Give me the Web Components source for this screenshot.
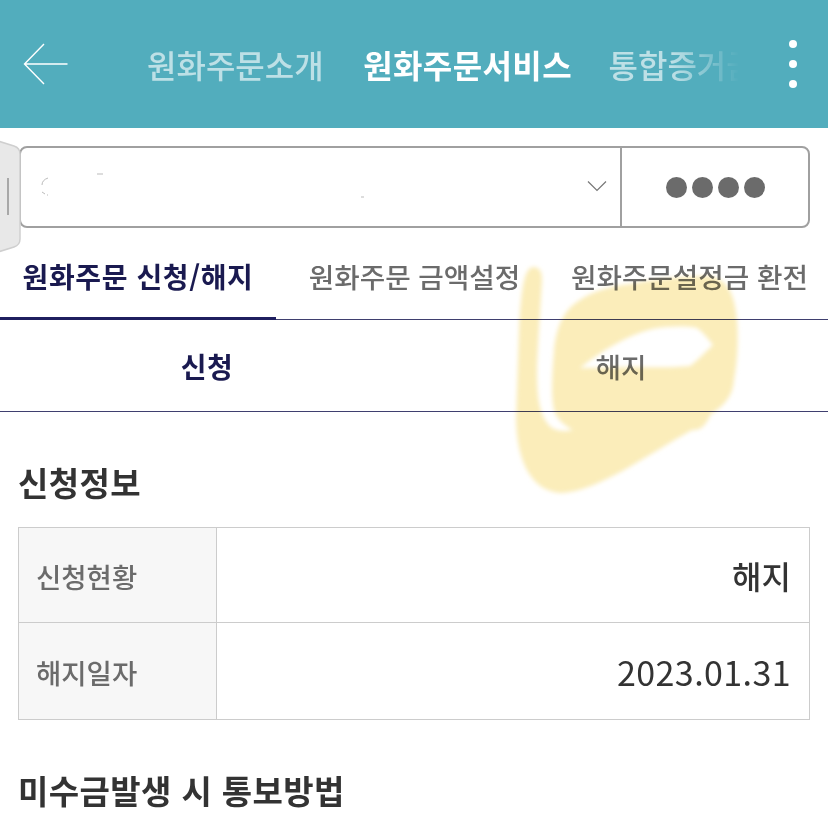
<!DOCTYPE html>
<html lang="ko">
<head>
<meta charset="utf-8">
<title>원화주문서비스</title>
<style>
    html, body {
        margin: 0;
        background: #fff;
    }
    body {
        position: relative;
        width: 828px;
        height: 814px;
        overflow: hidden;
        font-family: "Noto Sans CJK KR", "Noto Sans", sans-serif;
        color: #333;
    }
</style>
</head>
<body>
<app-header>
    <header-tab>원화주문소개</header-tab>
    <header-tab active>원화주문서비스</header-tab>
    <header-tab>통합증거금</header-tab>
</app-header>
<account-bar></account-bar>
<sub-tabs>
    <sub-tab active style="width:276px">원화주문 신청/해지</sub-tab>
    <sub-tab style="width:277px">원화주문 금액설정</sub-tab>
    <sub-tab style="width:273px">원화주문설정금 환전</sub-tab>
</sub-tabs>
<segment-tabs>
    <sub-tab active plain>신청</sub-tab>
    <sub-tab plain>해지</sub-tab>
</segment-tabs>
<section-title style="margin-bottom:21px">신청정보</section-title>
<info-table>
    <info-row label="신청현황" style="height:94px"><span style="font-weight:500">해지</span></info-row>
    <info-row label="해지일자" style="height:97px"><span style="font-size:34px;letter-spacing:.4px">2023.01.31</span></info-row>
</info-table>
<section-title style="margin-top:46px">미수금발생 시 통보방법</section-title>
<side-handle></side-handle>
<ink-scribble></ink-scribble>

<script>
class AppHeader extends HTMLElement {
    constructor() {
        super();
        this.attachShadow({mode: 'open'});
        this.shadowRoot.innerHTML = `
            <style>
                :host {
                    display: flex;
                    align-items: center;
                    height: 128px;
                    background: #52adbd;
                }
                #back {
                    flex: none;
                    width: 46px;
                    height: 42px;
                    margin-left: 23px;
                }
                #tabs {
                    flex: none;
                    display: flex;
                    gap: 39.5px;
                    width: 592px;
                    margin-left: 78px;
                    overflow: hidden;
                    -webkit-mask-image: linear-gradient(to right, #000 525px, transparent 592px);
                }
                #more {
                    flex: none;
                    display: flex;
                    flex-direction: column;
                    gap: 12px;
                    margin-left: 50px;
                }
                #more i {
                    display: block;
                    width: 8px;
                    height: 8px;
                    border-radius: 50%;
                    background: #fff;
                }
            </style>
            <svg id="back" viewBox="0 0 46 42" fill="none" stroke="#fff" stroke-width="1.4">
                <path d="M44.5 21H1.5M21 1L1.5 21L21 41"/>
            </svg>
            <div id="tabs"><slot></slot></div>
            <div id="more"><i></i><i></i><i></i></div>
        `;
    }
}

class HeaderTab extends HTMLElement {
    constructor() {
        super();
        this.attachShadow({mode: 'open'});
        this.shadowRoot.innerHTML = `
            <style>
                :host {
                    flex: none;
                    font-size: 32px;
                    line-height: 44px;
                    font-weight: 500;
                    color: rgba(255, 255, 255, 0.62);
                    white-space: nowrap;
                }
                :host([active]) {
                    color: #fff;
                    font-weight: 700;
                    letter-spacing: .4px;
                    margin-right: -3px;
                }
            </style>
            <slot></slot>
        `;
    }
}

class AccountBar extends HTMLElement {
    constructor() {
        super();
        this.attachShadow({mode: 'open'});
        this.shadowRoot.innerHTML = `
            <style>
                :host {
                    display: flex;
                    box-sizing: border-box;
                    height: 82px;
                    margin: 18px 18px 0 19px;
                    background: #fff;
                    border: 2px solid #a0a0a0;
                    border-radius: 8px;
                }
                #select {
                    flex: 1;
                    position: relative;
                    display: flex;
                    align-items: center;
                    justify-content: flex-end;
                    padding-right: 13px;
                    border-right: 2px solid #a0a0a0;
                }
                #specks {
                    position: absolute;
                    left: 18px;
                    top: 25px;
                    width: 340px;
                    height: 32px;
                }
                #chevron {
                    width: 20px;
                    height: 12px;
                    margin-top: -3px;
                }
                #count {
                    flex: none;
                    display: flex;
                    align-items: center;
                    justify-content: center;
                    gap: 5px;
                    width: 186px;
                }
                #count i {
                    display: block;
                    width: 21px;
                    height: 21px;
                    border-radius: 50%;
                    background: #6b6b6b;
                }
            </style>
            <div id="select">
                <svg id="specks" viewBox="0 0 340 32" fill="none" stroke="#bbb" stroke-width="1">
                    <path d="M9 5Q3 7 3 12M3 19l3 2M8 22h1M58 1h6M322 24h3"/>
                </svg>
                <svg id="chevron" viewBox="0 0 20 12" fill="none" stroke="#777" stroke-width="1.2">
                    <path d="M1 1.5L10 10.5L19 1.5"/>
                </svg>
            </div>
            <div id="count"><i></i><i></i><i></i><i></i></div>
        `;
    }
}

class SubTabs extends HTMLElement {
    constructor() {
        super();
        this.attachShadow({mode: 'open'});
        this.shadowRoot.innerHTML = `
            <style>
                :host {
                    display: flex;
                    box-sizing: border-box;
                    height: 92px;
                    padding-top: 20px;
                    border-bottom: 1px solid #3f3f6f;
                }
            </style>
            <slot></slot>
        `;
    }
}

class SegmentTabs extends HTMLElement {
    constructor() {
        super();
        this.attachShadow({mode: 'open'});
        this.shadowRoot.innerHTML = `
            <style>
                :host {
                    display: grid;
                    grid-template-columns: 1fr 1fr;
                    box-sizing: border-box;
                    height: 92px;
                    border-bottom: 1px solid #3f3f6f;
                }
            </style>
            <slot></slot>
        `;
    }
}

class SubTab extends HTMLElement {
    constructor() {
        super();
        this.attachShadow({mode: 'open'});
        this.shadowRoot.innerHTML = `
            <style>
                :host {
                    display: flex;
                    align-items: center;
                    justify-content: center;
                    box-sizing: border-box;
                    font-size: 27.7px;
                    font-weight: 500;
                    color: #6b6b6b;
                    white-space: nowrap;
                    border-bottom: 3px solid transparent;
                    margin-bottom: -1px;
                    padding-bottom: 14px;
                }
                :host([active]) {
                    color: #1a1a50;
                    font-size: 28px;
                    font-weight: 700;
                    letter-spacing: .6px;
                    border-bottom-color: #1f1f5f;
                }
                :host([plain]) {
                    border-bottom: 0;
                    margin-bottom: 0;
                    padding-bottom: 0;
                }
            </style>
            <slot></slot>
        `;
    }
}

class SectionTitle extends HTMLElement {
    constructor() {
        super();
        this.attachShadow({mode: 'open'});
        this.shadowRoot.innerHTML = `
            <style>
                :host {
                    display: block;
                    margin: 46px 18px 20px;
                    font-size: 33px;
                    line-height: 48px;
                    font-weight: 700;
                    letter-spacing: .4px;
                    color: #333;
                }
            </style>
            <slot></slot>
        `;
    }
}

class InfoTable extends HTMLElement {
    constructor() {
        super();
        this.attachShadow({mode: 'open'});
        this.shadowRoot.innerHTML = `
            <style>
                :host {
                    display: block;
                    margin: 0 18px;
                    border: 1px solid #ccc;
                }
            </style>
            <slot></slot>
        `;
    }
}

class InfoRow extends HTMLElement {
    constructor() {
        super();
        this.attachShadow({mode: 'open'});
        this.shadowRoot.innerHTML = `
            <style>
                :host {
                    display: grid;
                    grid-template-columns: 198px 1fr;
                    box-sizing: border-box;
                }
                :host(:not(:first-child)) {
                    border-top: 1px solid #ccc;
                }
                #label {
                    display: flex;
                    align-items: center;
                    padding: 2px 0 0 17px;
                    background: #f7f7f7;
                    border-right: 1px solid #ccc;
                    font-size: 27.5px;
                    font-weight: 500;
                    color: #6b6b6b;
                }
                #value {
                    display: flex;
                    align-items: center;
                    justify-content: flex-end;
                    padding-right: 18px;
                    font-size: 32px;
                    color: #333;
                }
            </style>
            <div id="label"></div>
            <div id="value"><slot></slot></div>
        `;
        this.shadowRoot.querySelector('#label').textContent = this.getAttribute('label');
    }
}

class SideHandle extends HTMLElement {
    constructor() {
        super();
        this.attachShadow({mode: 'open'});
        this.shadowRoot.innerHTML = `
            <style>
                :host {
                    position: absolute;
                    left: 0;
                    top: 140px;
                    width: 22px;
                    height: 114px;
                }
            </style>
            <svg width="22" height="114" viewBox="0 0 22 114">
                <path d="M-2 1L14 6Q20 8 20 14V99Q20 105 14 107L-2 112Z" fill="#e8e8e8" stroke="#cfcfcf" stroke-width="1.5"/>
                <rect x="7" y="38" width="2" height="37" fill="#a8a8a8"/>
            </svg>
        `;
    }
}

class InkScribble extends HTMLElement {
    constructor() {
        super();
        this.attachShadow({mode: 'open'});
        this.shadowRoot.innerHTML = `
            <style>
                :host {
                    position: absolute;
                    left: 0;
                    top: 0;
                    width: 828px;
                    height: 814px;
                    pointer-events: none;
                    mix-blend-mode: multiply;
                }
            </style>
            <svg width="828" height="814" viewBox="0 0 828 814">
                <filter id="soft"><feGaussianBlur stdDeviation="2"/></filter>
                <path filter="url(#soft)" fill="#fbedba" fill-rule="evenodd" d="
                    M533 267
                    C524 268 521 290 519 330
                    L516 420
                    C517 462 532 493 563 493
                    C600 490 645 456 692 430
                    C702 431 707 423 711 414
                    C724 406 733 396 734 380
                    C738 360 739 330 736 312
                    C733 290 725 278 708 276
                    C680 276 650 280 630 284
                    C610 286 590 292 577 302
                    C562 312 556 330 554 350
                    C552 376 551 396 554 410
                    C557 420 565 426 573 430
                    C563 432 553 431 548 424
                    C540 414 537 400 537 370
                    C538 340 541 300 542 280
                    C542 272 540 267 533 267Z
                    M580 368
                    C600 352 625 336 652 329
                    C670 326 685 326 697 328
                    C703 332 709 340 713 345
                    C705 352 698 360 690 366
                    C670 368 650 367 634 367
                    C615 367 597 368 580 368Z"/>
            </svg>
        `;
    }
}

customElements.define('app-header', AppHeader);
customElements.define('header-tab', HeaderTab);
customElements.define('account-bar', AccountBar);
customElements.define('sub-tabs', SubTabs);
customElements.define('segment-tabs', SegmentTabs);
customElements.define('sub-tab', SubTab);
customElements.define('section-title', SectionTitle);
customElements.define('info-table', InfoTable);
customElements.define('info-row', InfoRow);
customElements.define('side-handle', SideHandle);
customElements.define('ink-scribble', InkScribble);
</script>
</body>
</html>
